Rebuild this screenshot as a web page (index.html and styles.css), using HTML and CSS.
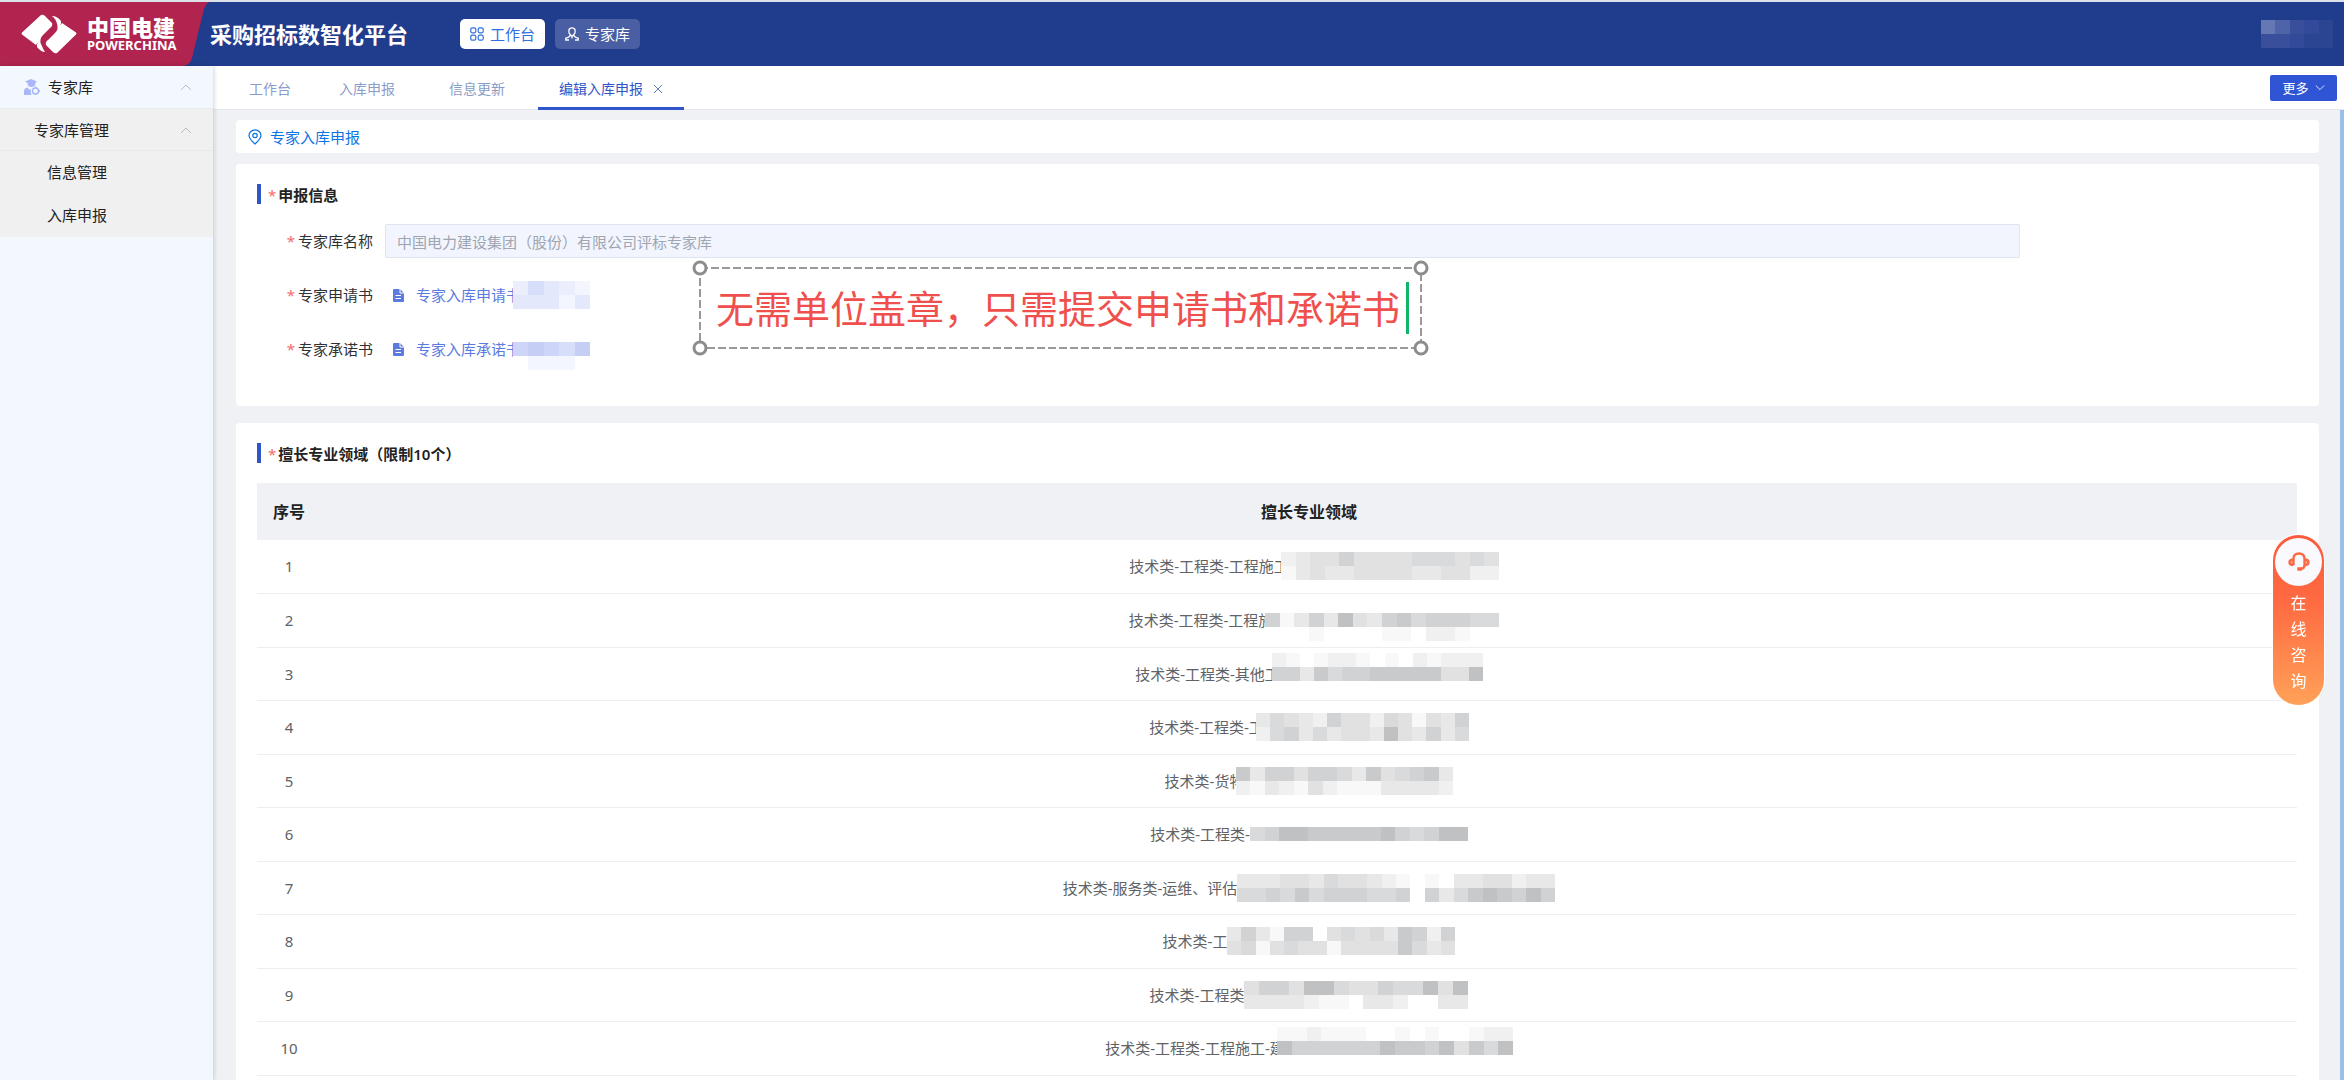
FILE: index.html
```html
<!DOCTYPE html>
<html lang="zh-CN">
<head>
<meta charset="utf-8">
<title>采购招标数智化平台</title>
<link rel="stylesheet" href="styles.css">
</head>
<body>
<div class="app">
  <header class="topbar">
    <div class="brand">
      <svg class="brand-shape" viewBox="0 0 210 64" preserveAspectRatio="none" aria-hidden="true"><path d="M0 0H210Q206 1 204 7L192 56Q190 63 183 64H0Z" fill="#b0244f"/></svg>
      <svg class="brand-mark" viewBox="0 0 56 40" aria-hidden="true">
        <path fill="#fff" d="M20 1Q22 0 24 2L31 9Q32 12 29 14L22 21Q18 25 20 30Q17 27 15 31L1 20.500Q0 19.500 1 18.500Z"/>
        <path fill="#fff" d="M16 30Q18 27 20 30Q22 35 24 38Q20 38 16 33Z"/>
        <path fill="#fff" d="M36 39Q34 40 32 38L25 31Q24 28 27 26L34 19Q38 15 36 10Q39 13 41 9L55 18.500Q56 19.500 55 20.500Z"/>
        <path fill="#fff" d="M40 10Q38 13 36 10Q35 5 31 2Q36 2 40 7Z"/>
      </svg>
      <div class="brand-name"><strong class="brand-cn">中国电建</strong><strong class="brand-en">POWERCHINA</strong></div>
    </div>
    <h1 class="platform">采购招标数智化平台</h1>
    <nav class="modules">
      <button type="button" class="module module-on">
        <svg class="ico" viewBox="0 0 14 14" fill="none" stroke="currentColor" stroke-width="1.200"><rect x=".8" y=".8" width="5" height="5" rx="1.500"/><rect x="8.200" y=".8" width="5" height="5" rx="1.500"/><rect x=".8" y="8.200" width="5" height="5" rx="1.500"/><rect x="8.200" y="8.200" width="5" height="5" rx="1.500"/></svg>
        工作台
      </button>
      <button type="button" class="module">
        <svg class="ico" viewBox="0 0 14 14" fill="none" stroke="currentColor" stroke-width="1.300"><path d="M5.200 7.500C2.800 5 3.500 .9 7 .9S11.200 5 8.800 7.500L7 9.500ZM5.200 7.800Q5.500 9.500 .8 11.200V13H4M8.800 7.800Q8.500 9.500 13.200 11.200V13H10M7 9.500V11.500"/></svg>
        专家库
      </button>
    </nav>
    <svg class="mosaic user" data-palette="navy" data-tones="54210|22100" width="72" height="28" aria-hidden="true"></svg>
  </header>

  <div class="shell">
    <aside class="sidebar">
      <button type="button" class="side-item side-root">
        <svg class="side-ico" viewBox="0 0 16 16" fill="#a9b6f8"><path d="M7 0L13 2.500L11.500 3.500Q11.500 8 7.500 8T3.500 4L1 2.500Z"/><path d="M0 16V12Q0 9 3.500 8.500L6 11L7.500 9.500Q6 12 7.500 16Z"/><circle cx="11.500" cy="12" r="3" fill="none" stroke="#a9b6f8" stroke-width="1.500"/><path d="M10.800 7.500h1.500v2h-1.500zM14.500 11.200H16v1.500h-1.500zM10.800 15h1.500v1h-1.500z"/></svg>
        <span class="side-text">专家库</span>
        <svg class="chev" viewBox="0 0 12 8"><path d="M1 7L6 2L11 7"/></svg>
      </button>
      <button type="button" class="side-item side-group">
        <span class="side-text">专家库管理</span>
        <svg class="chev" viewBox="0 0 12 8"><path d="M1 7L6 2L11 7"/></svg>
      </button>
      <a class="side-link" href="#info">信息管理</a>
      <a class="side-link" href="#apply">入库申报</a>
    </aside>

    <div class="workspace">
      <div class="tabbar">
        <nav class="tabs">
          <a class="tab tab-home" href="#home">工作台</a>
          <a class="tab" href="#list">入库申报</a>
          <a class="tab" href="#update">信息更新</a>
          <div class="tab tab-on"><a href="#edit">编辑入库申报</a><button type="button" class="close" aria-label="关闭"><svg viewBox="0 0 10 10"><path d="M1 1L9 9M9 1L1 9"/></svg></button></div>
        </nav>
        <button type="button" class="more">更多<svg viewBox="0 0 12 8"><path d="M1 1L6 6L11 1"/></svg></button>
      </div>

      <main class="content">
        <div class="crumb">
          <svg viewBox="0 0 14 16" fill="none" stroke="currentColor" stroke-width="1.200"><path d="M7 15Q1 9.500 1 6.500A6 5.700 0 0 1 13 6.500Q13 9.500 7 15Z"/><circle cx="7" cy="6.500" r="2.200"/></svg>
          专家入库申报
        </div>

        <section class="card card-form">
          <h2 class="title"><i class="req">*</i>申报信息</h2>
          <div class="form">
            <label class="label" for="lib"><i class="req">*</i>专家库名称</label>
            <input class="field" id="lib" type="text" value="中国电力建设集团（股份）有限公司评标专家库" disabled>
            <span class="label"><i class="req">*</i>专家申请书</span>
            <div class="file">
              <svg class="doc" viewBox="0 0 11 13"><path fill="#5b7be0" d="M1 0H7L11 4V12Q11 13 10 13H1Q0 13 0 12V1Q0 0 1 0Z"/><path stroke="#fff" fill="none" d="M7 0V4H11M2.500 6.500H8M2.500 9.500H8"/></svg>
              <a href="#form">专家入库申请书</a>
              <svg class="mosaic cut" data-palette="blue" data-tones="24321|33313" width="77" height="28" aria-hidden="true"></svg>
            </div>
            <span class="label"><i class="req">*</i>专家承诺书</span>
            <div class="file">
              <svg class="doc" viewBox="0 0 11 13"><path fill="#5b7be0" d="M1 0H7L11 4V12Q11 13 10 13H1Q0 13 0 12V1Q0 0 1 0Z"/><path stroke="#fff" fill="none" d="M7 0V4H11M2.500 6.500H8M2.500 9.500H8"/></svg>
              <a href="#promise">专家入库承诺书</a>
              <svg class="mosaic cut" data-palette="blue" data-tones="00000|56546|01110" width="77" height="42" aria-hidden="true"></svg>
            </div>
          </div>

          <div class="note">
            <svg class="note-frame" aria-hidden="true"><rect x="0" y="0" width="100%" height="100%"/><circle cx="0" cy="0" r="6"/><circle cx="100%" cy="0" r="6"/><circle cx="0" cy="100%" r="6"/><circle cx="100%" cy="100%" r="6"/></svg>
            <p class="note-text">无需单位盖章，只需提交申请书和承诺书</p>
            <span class="caret"></span>
          </div>
        </section>

        <section class="card">
          <h2 class="title"><i class="req">*</i>擅长专业领域（限制10个）</h2>
          <table class="grid">
            <thead><tr><th class="no">序号</th><th>擅长专业领域</th></tr></thead>
            <tbody>
              <tr><td>1</td><td><div class="area">技术类-工程类-工程施工<svg class="mosaic cut spill" data-tones="234464444555454|134334444334422" width="218" height="28"></svg></div></td></tr>
              <tr><td>2</td><td><div class="area">技术类-工程类-工程施<svg class="mosaic cut spill" data-tones="0000000000000000|6136384367566655|0001000011022100" width="234" height="42"></svg></div></td></tr>
              <tr><td>3</td><td><div class="area">技术类-工程类-其他工<svg class="mosaic cut" data-tones="210122101021222|663756677777448|000000000000000" width="211" height="42"></svg></div></td></tr>
              <tr><td>4</td><td><div class="area">技术类-工程类-工<svg class="mosaic cut" data-tones="354326442541436|256353443843635" width="213" height="28"></svg></div></td></tr>
              <tr><td>5</td><td><div class="area">技术类-货物<svg class="mosaic cut" data-tones="736646653745673|213214211133332" width="217" height="28"></svg></div></td></tr>
              <tr><td>6</td><td><div class="area">技术类-工程类-<svg class="mosaic" data-tones="568877777865688" width="218" height="14"></svg></div></td></tr>
              <tr><td>7</td><td><div class="area">技术类-服务类-运维、评估<svg class="mosaic" data-tones="3334435443210103344233|5565756665560635787686" width="318" height="28"></svg></div></td></tr>
              <tr><td>8</td><td><div class="area">技术类-工<svg class="mosaic" data-tones="3631660454537626|4514544144447534" width="228" height="28"></svg></div></td></tr>
              <tr><td>9</td><td><div class="area">技术类-工程类<svg class="mosaic" data-tones="466488544655848|333321103320033" width="224" height="28"></svg></div></td></tr>
              <tr><td>10</td><td><div class="area">技术类-工程类-工程施工-建<svg class="mosaic cut" data-tones="1121110010100122|8666666877684758|0000000000000000" width="236" height="42"></svg></div></td></tr>
            </tbody>
          </table>
        </section>
      </main>
    </div>
  </div>
</div>

<button type="button" class="service">
  <span class="service-ico"><svg viewBox="0 0 22 20" fill="none" stroke="#fa6a45" stroke-width="2.400"><path d="M5.500 13V7Q5.500 1.500 11 1.500T16.500 7V13Q16.500 17 12 17"/><path fill="#fa6a45" fill-opacity=".5" d="M5.500 7.500Q1.500 7.500 1.500 10.200T5.500 13M16.500 7.500Q20.500 7.500 20.500 10.200T16.500 13"/><rect x="10" y="16" width="3" height="2" fill="#fa6a45" stroke-width="1.500"/></svg></span>
  <span class="service-text">在<br>线<br>咨<br>询</span>
</button>
<script src="mosaic.js"></script>
</body>
</html>
```
FILE: styles.css
```css
* { box-sizing: border-box; }
body {
  margin: 0;
  font: 15px/20px "Noto Sans", "Noto Sans CJK SC", sans-serif;
  color: #303133;
}
button { font: inherit; border: 0; cursor: pointer; padding: 0; }
a { color: inherit; text-decoration: none; }
h1, h2, p { margin: 0; }
svg { flex: none; display: block; }

.app {
  height: 100vh;
  display: flex;
  flex-direction: column;
  border-top: 2px solid #dfe1ea;
}

/* top bar */
.topbar {
  flex: none;
  height: 64px;
  display: flex;
  align-items: center;
  background: #203c8c;
  padding-right: 11px;
  color: #fff;
}
.brand {
  position: relative;
  width: 210px;
  height: 64px;
  padding-left: 21px;
  display: flex;
  align-items: center;
  gap: 10px;
}
.brand-shape { position: absolute; inset: 0; width: 210px; height: 64px; }
.brand-mark { position: relative; width: 56px; height: 40px; }
.brand-name { position: relative; display: flex; flex-direction: column; }
.brand-cn { font-size: 22px; line-height: 22px; font-weight: 900; }
.brand-en { font-size: 13px; line-height: 14px; font-weight: 700; }
.platform { font-size: 22px; line-height: 30px; font-weight: 700; }
.modules { display: flex; gap: 10px; margin-left: 52px; }
.module {
  height: 30px;
  padding: 0 10px;
  display: flex;
  align-items: center;
  gap: 6px;
  border-radius: 5px;
  background: #4a5fa3;
  color: #fff;
}
.module-on { background: #fff; color: #2f6fe0; }
.ico { width: 14px; height: 14px; }
.user { margin-left: auto; }

/* side menu */
.shell { flex: 1; min-height: 0; display: flex; }
.sidebar {
  flex: none;
  width: 213px;
  background: #f3f8ff;
  box-shadow: 1px 0 4px rgba(0, 21, 41, .18);
  z-index: 1;
  color: #222;
}
.side-item {
  width: 100%;
  height: 43px;
  display: flex;
  align-items: center;
  padding: 0 21px 0 24px;
  border-bottom: 1px solid #e6e9ee;
  background: none;
  color: inherit;
  text-align: left;
}
.side-ico { width: 16px; height: 16px; margin-right: 8px; }
.side-text { flex: 1; }
.side-group { height: 42px; padding-left: 34px; background: #f0f0f0; }
.side-link {
  display: block;
  height: 43px;
  line-height: 43px;
  padding-left: 47px;
  background: #f0f0f0;
}
.chev { width: 12px; height: 8px; fill: none; stroke: #b9bcc2; }

/* open pages */
.workspace {
  flex: 1;
  min-width: 0;
  display: flex;
  flex-direction: column;
  background: #f0f1f5;
}
.tabbar {
  flex: none;
  height: 44px;
  display: flex;
  justify-content: space-between;
  align-items: center;
  padding: 0 7px 0 15px;
  background: #fff;
  border-bottom: 1px solid #e4e7ed;
}
.tabs { display: flex; gap: 12px; font-size: 14px; color: #8a9cc8; }
.tab {
  height: 44px;
  display: flex;
  align-items: center;
  padding: 3px 21px 0;
}
.tab-home { padding-right: 15px; }
.tab-on {
  gap: 10px;
  color: #2f55c8;
  border-bottom: 3px solid #2f55c8;
  padding-top: 6px;
}
.close { background: none; }
.close svg { width: 10px; height: 10px; stroke: #5f7dc4; fill: none; }
.more {
  width: 67px;
  height: 26px;
  display: flex;
  align-items: center;
  justify-content: center;
  gap: 6px;
  border-radius: 2px;
  background: #2f55d4;
  color: #fff;
  font-size: 13px;
}
.more svg { width: 10px; height: 8px; fill: none; stroke: #fff; }

.content {
  flex: 1;
  min-height: 0;
  overflow: hidden auto;
  scrollbar-width: none;
  padding: 10px 21px 0 23px;
  border-right: 4px solid #9cbde8;
}
.crumb {
  height: 33px;
  display: flex;
  align-items: center;
  gap: 8px;
  padding: 0 12px;
  margin-bottom: 11px;
  border-radius: 4px;
  background: #fff;
  color: #0b74e5;
}
.crumb svg { width: 14px; height: 16px; }

.card {
  position: relative;
  padding: 20px 22px 40px 21px;
  border-radius: 4px;
  background: #fff;
}
.card-form { margin-bottom: 17px; }
.title {
  display: flex;
  gap: 2px;
  height: 20px;
  margin-bottom: 20px;
  padding-left: 7px;
  border-left: 4px solid #2f55c8;
  font-size: 15px;
  line-height: 22px;
  font-weight: 600;
  color: #222;
}
.req { color: #f56c6c; font-style: normal; font-weight: 400; }

.form {
  width: 86.4%;
  display: grid;
  grid-template-columns: 116px 1fr;
  grid-auto-rows: 34px;
  gap: 20px 12px;
  align-items: center;
}
.label { text-align: right; }
.label .req { margin-right: 3px; }
.field {
  width: 100%;
  height: 34px;
  padding: 0 11px;
  border: 1px solid #e0e4ee;
  border-radius: 2px;
  background: #f2f5fe;
  color: #a0a5b2;
  font: inherit;
}
.file { display: flex; align-items: center; padding-left: 8px; color: #5b7be0; }
.doc { width: 11px; height: 13px; margin-right: 12px; }

.cut { margin-left: -8px; }
.spill { margin-right: -10px; }

/* on-page annotation */
.note {
  position: absolute;
  left: 464px;
  top: 104px;
  height: 80px;
  padding: 0 12px 0 16px;
  display: flex;
  align-items: center;
  gap: 6px;
}
.note-frame { position: absolute; inset: 0; width: 100%; height: 100%; overflow: visible; }
.note-frame rect { fill: none; stroke: #999; stroke-width: 2; stroke-dasharray: 8 3; }
.note-frame circle { fill: #fff; stroke: #8c8c8c; stroke-width: 3; }
.note-text { font-size: 38px; line-height: 56px; color: #f0504d; white-space: nowrap; }
.caret { width: 3px; height: 52px; background: #10b566; }

/* table */
.grid { width: 100%; border-collapse: collapse; table-layout: fixed; color: #606266; }
.grid th {
  height: 57px;
  padding: 0;
  background: #f0f1f5;
  color: #222;
  font-size: 16px;
  font-weight: 600;
}
.grid .no { width: 64px; }
.grid td {
  height: 53px;
  padding: 0;
  border-bottom: 1px solid #ebeef2;
  text-align: center;
}
.grid tr:nth-child(even) td { height: 54px; }
.area { display: flex; justify-content: center; align-items: center; white-space: nowrap; }

/* floating help */
.service {
  position: fixed;
  right: 19px;
  top: 534px;
  width: 53px;
  padding: 3px 2px 11px;
  display: flex;
  flex-direction: column;
  align-items: center;
  gap: 4px;
  border: 1px solid #fff;
  border-radius: 27px;
  background: linear-gradient(#fb5a3c, #ff6b42 40%, #ffa158);
  color: #fff;
}
.service-ico {
  width: 47px;
  height: 48px;
  display: grid;
  place-items: center;
  border-radius: 50%;
  background: #fafafe;
}
.service-ico svg { width: 22px; height: 20px; }
.service-text { font-size: 16px; line-height: 26px; }
```
FILE: mosaic.js
```js
// Draws the masked parts of private values: one digit per tile, rows split by "|".
const palettes = {
  gray: ["#ffffff", "#f8f8f8", "#f0f0f0", "#e8e8e9", "#e1e1e2", "#d9dadb", "#d1d2d3", "#c9cacb", "#c0c1c2"],
  blue: ["#ffffff", "#f3f6fe", "#eaeefd", "#e3e8fb", "#d6defa", "#cdd6f8", "#c5cff6"],
  navy: ["#2b4592", "#33499a", "#3a4f9b", "#44589f", "#4f63a8", "#6578b3"]
};
document.querySelectorAll(".mosaic").forEach(svg => {
  const colors = palettes[svg.dataset.palette || "gray"];
  const rows = svg.dataset.tones.split("|");
  svg.setAttribute("viewBox", `0 0 ${rows[0].length} ${rows.length}`);
  svg.setAttribute("preserveAspectRatio", "none");
  svg.setAttribute("shape-rendering", "crispEdges");
  rows.forEach((row, y) => [...row].forEach((tone, x) => {
    const tile = document.createElementNS("http://www.w3.org/2000/svg", "rect");
    tile.setAttribute("x", x);
    tile.setAttribute("y", y);
    tile.setAttribute("width", 1);
    tile.setAttribute("height", 1);
    tile.setAttribute("fill", colors[tone]);
    svg.append(tile);
  }));
});
```
